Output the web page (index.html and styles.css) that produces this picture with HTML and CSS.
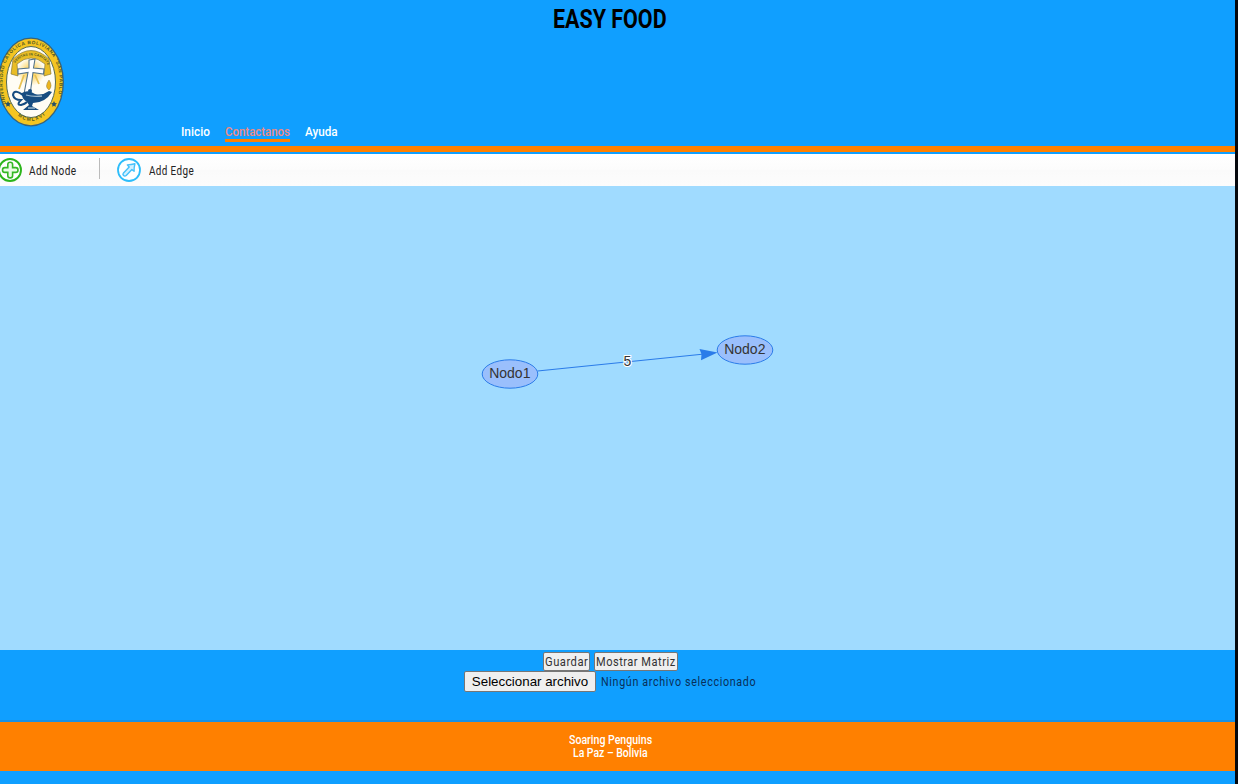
FILE: index.html
```html
<!DOCTYPE html>
<html lang="es">
<head>
<meta charset="utf-8">
<title>Easy Food</title>
<link rel="stylesheet" href="styles.css">
</head>
<body>
<div class="page">
  <header class="header">
    <h1 class="title"><span class="fit fit-title">EASY FOOD</span></h1>
    <svg class="logo" width="64" height="90" viewBox="0 0 64 90">
      <defs>
        <path id="ringTop" d="M6 67 C-5 29 12 7 31 7 C50 7 67 29 56 67"/>
        <path id="ringBottom" d="M12 73 Q31 95 50 73"/>
        <path id="ribbon" d="M13 34 Q15 18.500 31 18.500 Q47 18.500 49 34"/>
        <radialGradient id="glow"><stop offset="0" stop-color="#ffc738"/><stop offset=".5" stop-color="#ffe08a"/><stop offset="1" stop-color="#fffdf4"/></radialGradient>
      </defs>
      <ellipse cx="31" cy="45" rx="32.300" ry="43.800" fill="#f4c522" stroke="#38637b" stroke-width="1.300"/>
      <ellipse cx="31" cy="45" rx="24.500" ry="35.500" fill="#fffdf4" stroke="#556b55"/>
      <circle cx="31" cy="35" r="14" fill="url(#glow)"/>
      <path d="M11 37 L13 22 Q31 5 49 22 L51 37 L44 39 L45 27 Q31 15 17 27 L18 39Z" fill="#e9bd25" stroke="#8c7b30" stroke-width=".7"/>
      <g class="seal-text">
        <text><textPath href="#ringTop" textLength="143">UNIVERSIDAD CATOLICA BOLIVIANA "SAN PABLO"</textPath></text>
        <text><textPath href="#ringBottom" startOffset="8" textLength="30">MCMLXVI</textPath></text>
        <text class="motto"><textPath href="#ribbon" startOffset="8" textLength="39">VERITAS IN CARITATE</textPath></text>
      </g>
      <path d="M29 23 L35 22 L33.500 31 L44 32 L43.500 37 L33 35.500 L30 58 L24 57 L28 35.500 L18 37 L18 32 L29 31Z" fill="#fff" stroke="#54738a" stroke-width="1.100"/>
      <path d="M24 38 L19 52 M35 38 L39 47" stroke="#e8c152" stroke-width="1.800"/>
      <path d="M22 56 Q28 52 35 57 Q42 59 49 54 L52 55 Q45 66 33 66 L32 69 L39 73 L23 73 L29 68 L27 65 Q21 61 22 56Z" fill="#174d80"/>
      <path d="M24 59 Q14 51 13 58 Q14 63 21 63 Q16 68 21 68 Q25 67 27 65" fill="none" stroke="#174d80" stroke-width="2"/>
      <path d="M26 58 Q33 60 42 59 M28 71h7" fill="none" stroke="#9db9ca" stroke-width="1.300"/>
      <circle cx="30" cy="54" r="2" fill="#174d80"/>
      <path d="M49 53 Q44 50 49 43 Q53 49 49 53Z" fill="#edb51e" stroke="#8b793b" stroke-width=".5"/>
      <path d="M8 64l1 2 2 .3-1.500 1.500.3 2-1.800-1-1.800 1 .3-2L5 66.300l2-.3zM54 64l1 2 2 .3-1.500 1.500.3 2-1.800-1-1.800 1 .3-2-1.500-1.500 2-.3z" fill="#285267"/>
    </svg>
    <nav class="nav">
      <a class="nav-home"><span class="fit fit-home">Inicio</span></a>
      <a class="nav-contact"><span class="fit fit-contact">Contactanos</span></a>
      <a class="nav-help"><span class="fit fit-help">Ayuda</span></a>
    </nav>
  </header>
  <div class="toolbar">
    <svg class="node-icon" width="22" height="24" viewBox="0 0 22 24"><circle cx="10" cy="12" r="11" fill="#fff" stroke="#2cb51b" stroke-width="1.900"/><path d="M7.800 6.500Q7.800 4.300 10.200 4.300Q12.600 4.300 12.600 6.500V9.600h3.200Q18 9.600 18 12Q18 14.400 15.800 14.400h-3.200v3.300Q12.600 19.900 10.200 19.900Q7.800 19.900 7.800 17.700v-3.300H4.700Q2.500 14.400 2.500 12Q2.500 9.600 4.700 9.600h3.100z" fill="#e9fbe4" stroke="#35b824" stroke-width="1.600"/></svg>
    <span class="label label-node"><span class="fit fit-node">Add Node</span></span>
    <i class="separator"></i>
    <svg class="edge-icon" width="24" height="24" viewBox="0 0 24 24"><circle cx="12" cy="12" r="11" fill="#fff" stroke="#2dbdfa" stroke-width="1.800"/><path d="M10.300 6.900Q14 6.700 17.900 5.700Q16.900 9.500 17.100 13.200L14.900 11.600L9.200 17.500Q7.800 18.700 6.500 17.500Q5.300 16.200 6.500 14.900L12.200 9Z" fill="#d2f0ff" stroke="#46c1fa" stroke-width="1.400" stroke-linejoin="round"/></svg>
    <span class="label label-edge"><span class="fit fit-edge">Add Edge</span></span>
  </div>
  <main class="canvas">
    <svg class="graph" width="1235" height="464" viewBox="0 186 1235 464">
      <path d="M537.500 371L702 354.300" stroke="#2b7ce9" stroke-width="1.100" fill="none"/>
      <path d="M717.500 352.500L699.500 349L701.500 354.300L701 360.200Z" fill="#2b7ce9"/>
      <ellipse cx="510" cy="374" rx="27.800" ry="14.200" fill="#9abffc" stroke="#2b7ce9"/>
      <ellipse cx="745" cy="350" rx="27.800" ry="14.200" fill="#9abffc" stroke="#2b7ce9"/>
      <text x="509.800" y="378">Nodo1</text>
      <text x="744.800" y="354">Nodo2</text>
      <text class="weight" x="627.500" y="366">5</text>
    </svg>
  </main>
  <section class="actions">
    <div class="row">
      <button class="btn btn-save"><span class="fit fit-save">Guardar</span></button>
      <button class="btn btn-matrix"><span class="fit fit-matrix">Mostrar Matriz</span></button>
    </div>
    <div class="row file-row">
      <button class="btn btn-file">Seleccionar archivo</button>
      <span class="file-name"><span class="fit fit-file">Ningún archivo seleccionado</span></span>
    </div>
  </section>
  <footer class="footer">
    <div class="line-team"><span class="fit fit-team">Soaring Penguins</span></div>
    <div class="line-city"><span class="fit fit-city">La Paz – Bolivia</span></div>
  </footer>
</div>
</body>
</html>
```
FILE: styles.css
```css
* { box-sizing: border-box; }
html { background: #05080d; }
body { margin: 0; overflow: hidden; font-family: Roboto, sans-serif; }
.page { width: 1235px; height: 784px; background: #109fff; }
.fit { display: inline-block; white-space: nowrap; transform-origin: 0 50%; }
.header { height: 152px; border-bottom: 6px solid #ff8000; display: flex; flex-direction: column; }
.title { margin: 0; height: 37px; width: 114px; margin-left: 553px; font-size: 26px; font-weight: 700; line-height: 38px; }
.fit-title { transform: scaleX(.825); }
.logo { flex: none; display: block; }
.nav { display: flex; margin-left: 181px; color: #fff; font-size: 13px; font-weight: 500; line-height: 15px; height: 18px; margin-top: -3px; }
.nav a { height: 18px; }
.nav-home { width: 29px; margin-right: 15px; }
.nav-contact { width: 65px; margin-right: 15px; color: #ef8a83; border-bottom: 3px solid #ff8000; }
.nav-help { width: 33px; }
.fit-home { transform: scaleX(.91); }
.fit-contact { transform: scaleX(.88); }
.fit-help { transform: scaleX(.9); }
.toolbar { height: 32px; margin-top: 2px; display: flex; align-items: center; background: linear-gradient(#fff, #fcfcfc 48%, #fafafa 50%, #fcfcfc); color: #222; font-size: 12.500px; line-height: 16px; letter-spacing: .5px; }
.node-icon { margin-right: 7px; }
.label { margin-top: 2px; }
.label-node { width: 47px; }
.separator { width: 1px; height: 21px; background: #bbb; margin: 0 17px 3px 23px; }
.label-edge { width: 46px; margin-left: 8px; }
.fit-node { transform: scaleX(.805); }
.fit-edge { transform: scaleX(.79); }
.canvas { height: 464px; background: #a0dbff; }
.graph { display: block; font: 14px "Liberation Sans", Arial, sans-serif; fill: #343434; text-anchor: middle; }
.weight { stroke: #fff; stroke-width: 2px; paint-order: stroke; }
.seal-text { font: bold 4.800px "Liberation Sans", sans-serif; fill: #4e5723; }
.motto { font-size: 3.500px; }
.actions { height: 70px; padding-top: 2px; }
.row { display: flex; height: 19px; gap: 4px; padding-left: 543px; }
.file-row { height: 21px; padding-left: 464px; gap: 5px; }
.btn { border: 1px solid #767676; border-radius: 2px; background: #efefef; padding: 0 1px; text-align: left; }
.btn-save, .btn-matrix { font: 13px/16px Roboto, sans-serif; letter-spacing: .6px; color: #333; }
.btn-save { width: 47px; }
.btn-matrix { width: 84px; }
.fit-save { transform: scaleX(.86); }
.fit-matrix { transform: scaleX(.85); }
.btn-file { width: 132px; font: 13.333px "Liberation Sans", Arial, sans-serif; text-align: center; color: #000; }
.file-name { width: 155px; font-size: 13px; line-height: 21px; letter-spacing: .8px; color: #08305a; }
.fit-file { transform: scaleX(.825); }
.footer { height: 51px; border-top: 2px solid #1a90e2; background: #ff8000; background-clip: padding-box; color: #fff; font-size: 12px; font-weight: 500; line-height: 13px; padding-top: 12px; }
.line-team { width: 83px; margin-left: 569px; height: 13px; }
.line-city { width: 75px; margin-left: 573px; height: 13px; }
.fit-team { transform: scaleX(.88); }
.fit-city { transform: scaleX(.87); }
```
